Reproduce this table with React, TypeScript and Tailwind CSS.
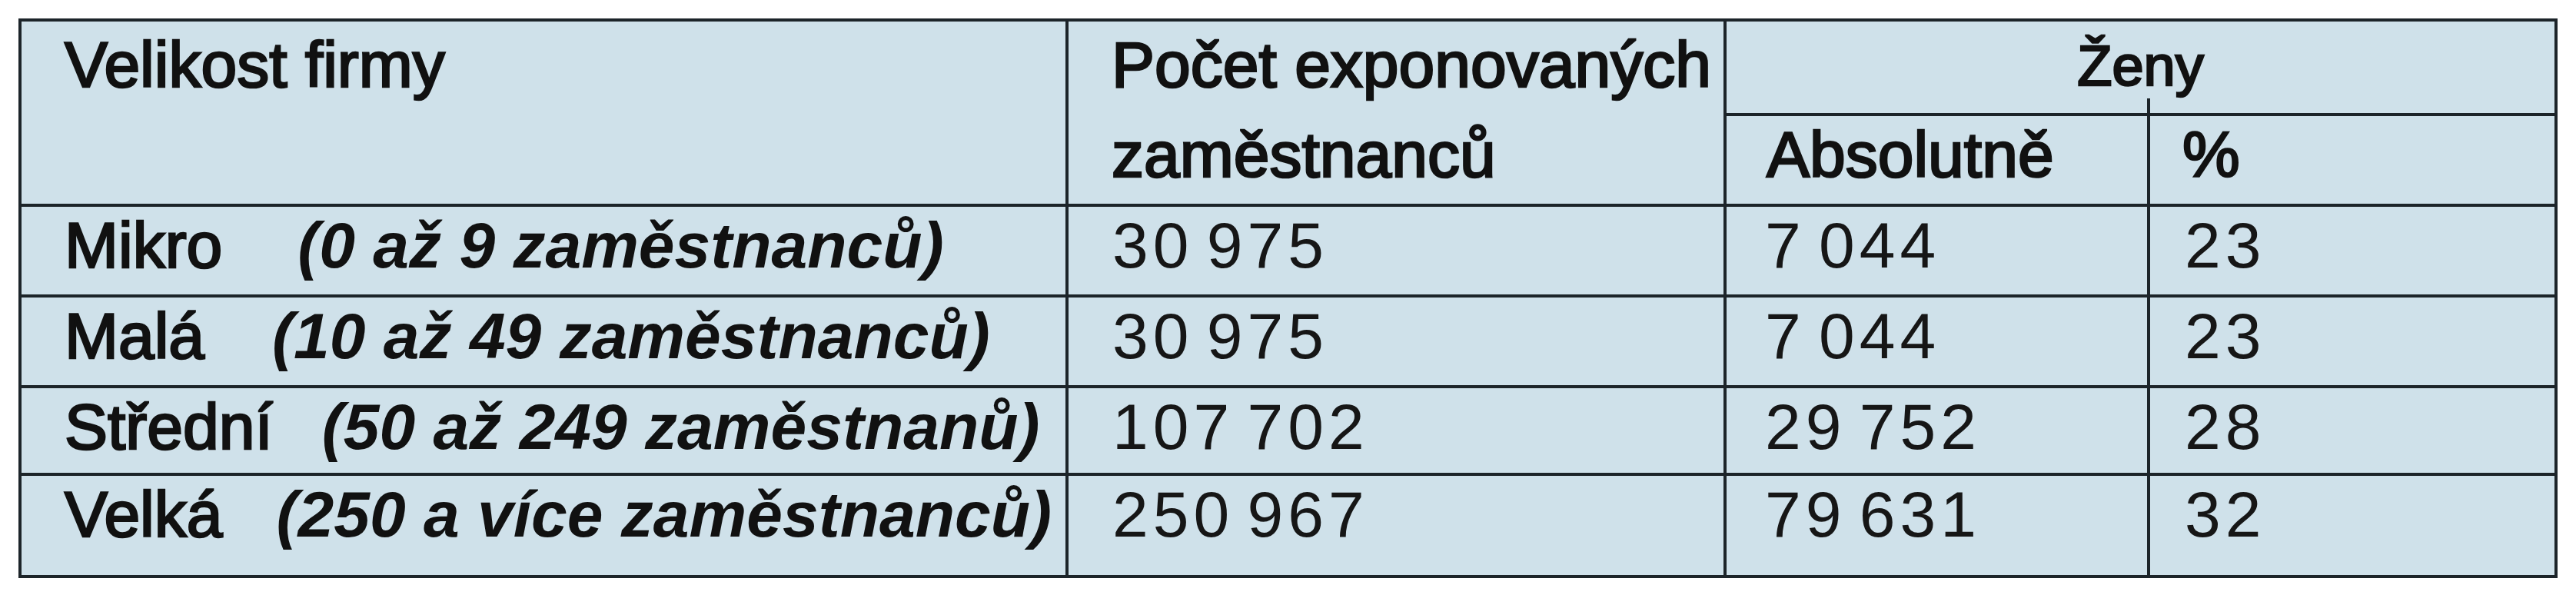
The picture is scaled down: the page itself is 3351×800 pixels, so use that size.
import React from "react";

const font = "font-['Liberation_Sans',Arial,sans-serif]";
const label = "[-webkit-text-stroke:2.6px_#111]";

type Row = { name: string; range: string; ml: string; total: string; abs: string; pct: string; h: string };

const rows: Row[] = [
  { name: "Mikro", range: "(0 až 9 zaměstnanců)", ml: "ml-[98px]", total: "30 975", abs: "7 044", pct: "23", h: "h-[118px]" },
  { name: "Malá", range: "(10 až 49 zaměstnanců)", ml: "ml-[88px]", total: "30 975", abs: "7 044", pct: "23", h: "h-[118px]" },
  { name: "Střední", range: "(50 až 249 zaměstnanů)", ml: "ml-[64px]", total: "107 702", abs: "29 752", pct: "28", h: "h-[114px]" },
  { name: "Velká", range: "(250 a více zaměstnanců)", ml: "ml-[70px]", total: "250 967", abs: "79 631", pct: "32", h: "h-[133px]" },
];

const line = "border-[#1c2429]";
const num = "tracking-[6px] [word-spacing:-12px] text-[#161616]";

export default function App() {
  return (
    <div className={`w-[3351px] h-[800px] bg-white pt-[24px] pl-[24px] ${font}`}>
      <div className={`w-[3303px] h-[728px] border-4 ${line} bg-[#cfe1ea] text-[84px] leading-none text-[#111]`}>
        <div className="grid grid-cols-[1358px_856px_551px_530px] grid-rows-[119px_118px]">
          <div className={`row-span-2 pl-[56px] pt-[14px] ${label}`}>Velikost firmy</div>
          <div className={`row-span-2 border-l-4 ${line} pl-[56px] pt-[14px] ${label}`}>
            <div>Počet exponovaných</div>
            <div className="mt-[33px]">zaměstnanců</div>
          </div>
          <div className={`col-span-2 border-l-4 ${line} pt-[21px] text-center text-[74px] ${label}`}>Ženy</div>
          <div className={`border-l-4 border-t-4 ${line} pl-[52px] pt-[8px] ${label}`}>Absolutně</div>
          <div className={`relative border-l-4 border-t-4 ${line} pl-[42px] pt-[8px] ${label}`}>
            <span className="absolute -left-[4px] -top-[23px] h-[20px] w-[4px] bg-[#1c2429]" />
            %
          </div>
        </div>
        {rows.map((r) => (
          <div key={r.name} className={`grid grid-cols-[1358px_856px_551px_530px] ${r.h} border-t-4 ${line}`}>
            <div className="pl-[56px] pt-[8px] whitespace-nowrap">
              <span className={label}>{r.name}</span>
              <span className={`${r.ml} font-bold italic`}>{r.range}</span>
            </div>
            <div className={`border-l-4 ${line} pl-[57px] pt-[8px] ${num}`}>{r.total}</div>
            <div className={`border-l-4 ${line} pl-[50px] pt-[8px] ${num}`}>{r.abs}</div>
            <div className={`border-l-4 ${line} pl-[45px] pt-[8px] ${num}`}>{r.pct}</div>
          </div>
        ))}
      </div>
    </div>
  );
}
